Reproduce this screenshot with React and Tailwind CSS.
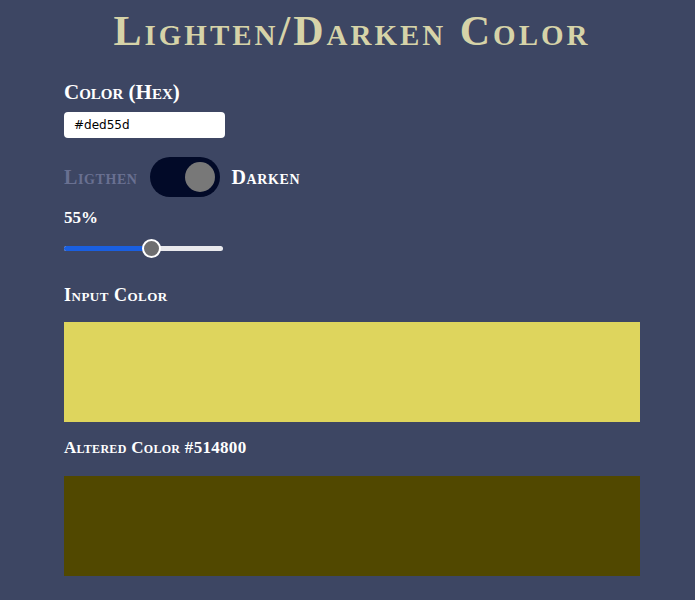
export default function App() {
  const input = "#ded55d";
  const altered = "#514800";
  const pct = 55;

  return (
    <div className="min-h-[600px] bg-[#3d4663] font-['Liberation_Serif',serif] [font-variant-caps:small-caps] text-white">
      <main className="pl-16 pr-[55px] pt-[5px] pb-6">
        {/* title */}
        <h1 className="text-center text-[42px] font-bold leading-[52px] tracking-[3px] text-[#d6d3a8]">
          Lighten/Darken Color
        </h1>

        {/* hex input */}
        <label className="mt-[23px] block text-[21px] font-bold leading-6">Color (Hex)</label>
        <input
          className="mt-[8px] block h-[26px] w-[161px] rounded-[4px] bg-white px-[10px] font-['DejaVu_Sans',sans-serif] text-[12px] text-black [font-variant-caps:normal] outline-none"
          defaultValue={input}
        />

        {/* toggle */}
        <div className="mt-[19px] flex items-center gap-[12px]">
          <span className="text-[20px] font-bold tracking-[0.6px] text-[#697091]">Ligthen</span>
          <div className="flex h-[40px] w-[70px] items-center justify-end rounded-full bg-[#020a28] px-[5px]">
            <div className="h-[30px] w-[30px] rounded-full bg-[#787878]" />
          </div>
          <span className="text-[20px] font-bold tracking-[0.6px]">Darken</span>
        </div>

        {/* slider */}
        <div className="mt-[11px] text-[17px] font-bold leading-5">{pct}%</div>
        <div className="relative mt-[11px] h-[18px] w-[159px]">
          <div className="absolute left-0 right-0 top-[7px] h-[5px] rounded-full bg-[#e9e9ed]" />
          <div className="absolute left-0 top-[7px] h-[5px] w-[88px] rounded-full bg-[#1a5fe0]" />
          <div className="absolute left-[78px] top-0 h-[19px] w-[19px] rounded-full border-2 border-white bg-[#6e6e70]" />
        </div>

        {/* swatches */}
        <h2 className="mt-[28px] text-[18px] font-bold leading-5 tracking-[0.5px]">Input Color</h2>
        <div className="mt-[17px] h-[100px] w-full bg-[#ded55d]" />

        <h2 className="mt-[16px] text-[17px] font-bold leading-5 tracking-[0.3px]">Altered Color #{altered.slice(1)}</h2>
        <div className="mt-[18px] h-[100px] w-full" style={{ backgroundColor: altered }} />
      </main>
    </div>
  );
}
